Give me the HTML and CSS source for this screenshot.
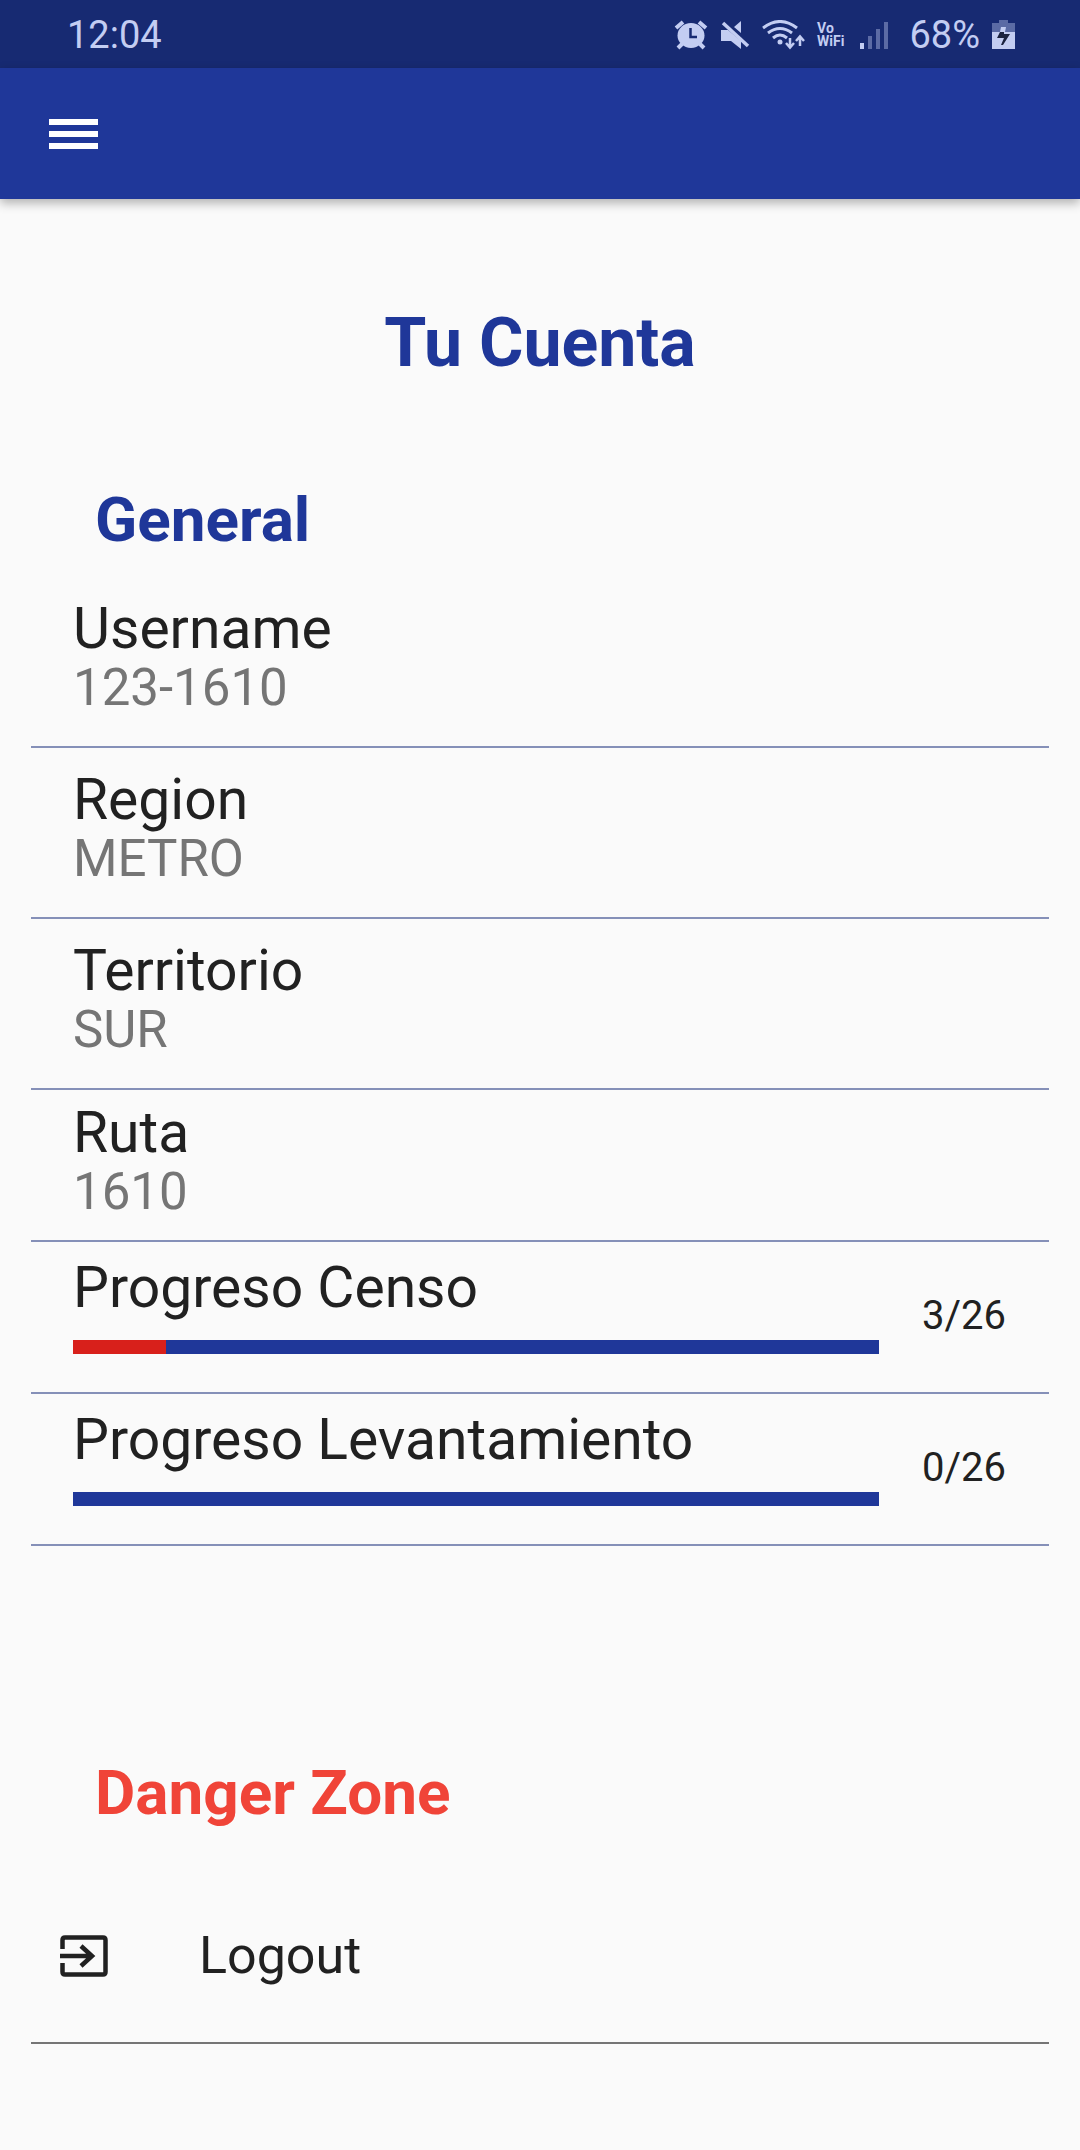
FILE: index.html
```html
<!DOCTYPE html>
<html lang="es">
<head>
    <meta charset="UTF-8">
    <meta name="viewport" content="width=device-width, initial-scale=1.0">
    <title>Tu Cuenta</title>
    <link rel="stylesheet" href="styles.css">
</head>
<body>
    <div class="status-bar">
        <span class="clock">12:04</span>
        <div class="status-icons">
            <!-- alarm -->
            <svg class="icon-alarm" width="34" height="30" viewBox="0 0 34 30">
                <path d="M2 8L9 2M32 8L25 2" stroke="currentColor" stroke-width="4" fill="none"/>
                <path d="M8 24L4 28M26 24L30 28" stroke="currentColor" stroke-width="4" fill="none"/>
                <ellipse cx="17" cy="15.500" rx="13.500" ry="12.500" fill="currentColor"/>
                <path d="M16.500 8V17H23" stroke="#172a72" stroke-width="2.500" fill="none"/>
            </svg>
            <!-- muted speaker -->
            <svg class="icon-mute" width="30" height="30" viewBox="0 0 30 30">
                <path d="M1 10H8L21 21V29L11 21H1ZM21 1V13L14 7Z" fill="currentColor"/>
                <path d="M3 3L28 26" stroke="currentColor" stroke-width="3.500"/>
            </svg>
            <!-- wifi -->
            <svg class="icon-wifi" width="43" height="30" viewBox="0 0 43 30">
                <g stroke="currentColor" stroke-width="3" fill="none">
                    <path d="M1 8Q18 -5 35 8"/>
                    <path d="M6 13Q18 4 30 13"/>
                    <path d="M11 18Q18 12 25 18"/>
                </g>
                <circle cx="18" cy="22" r="2.500" fill="currentColor"/>
                <path d="M28 18V27M24 23L28 27.500L32 23M38 26V17M34 21L38 16.500L42 21" stroke="currentColor" stroke-width="2.500" fill="none"/>
            </svg>
            <div class="vowifi">
                <span>Vo</span>
                <span>WiFi</span>
            </div>
            <!-- signal -->
            <svg class="icon-signal" width="29" height="29" viewBox="0 0 29 29" fill="currentColor">
                <rect x="0" y="22" width="4" height="6"/>
                <g opacity="0.4">
                    <rect x="8" y="15" width="4" height="13"/>
                    <rect x="16" y="8" width="4" height="20"/>
                    <rect x="24" y="1" width="4" height="27"/>
                </g>
            </svg>
            <span class="battery-level">68%</span>
            <!-- battery -->
            <svg class="icon-battery" width="23" height="30" viewBox="0 0 23 30">
                <path d="M7 0H16V3H23V12H0V3H7Z" fill="currentColor" opacity="0.4"/>
                <path d="M0 12H23V29H0Z" fill="currentColor"/>
                <path d="M9 7H14L13 12H8Z" fill="currentColor"/>
                <path d="M8 12H12L12 14H18L11 25H9L12 18H5Z" fill="#1b2340"/>
            </svg>
        </div>
    </div>

    <header class="app-bar">
        <button class="menu-button" aria-label="Menu">
            <span></span>
            <span></span>
            <span></span>
        </button>
    </header>

    <main class="account">
        <h1>Tu Cuenta</h1>

        <h2>General</h2>
        <div class="row">
            <div class="name">Username</div>
            <div class="value">123-1610</div>
        </div>
        <div class="row">
            <div class="name">Region</div>
            <div class="value">METRO</div>
        </div>
        <div class="row">
            <div class="name">Territorio</div>
            <div class="value">SUR</div>
        </div>
        <div class="row dense">
            <div class="name">Ruta</div>
            <div class="value">1610</div>
        </div>
        <div class="row progress-row">
            <div class="progress-box">
                <label class="name" for="censo">Progreso Censo</label>
                <progress id="censo" value="3" max="26"></progress>
            </div>
            <span class="count">3/26</span>
        </div>
        <div class="row progress-row">
            <div class="progress-box">
                <label class="name" for="levantamiento">Progreso Levantamiento</label>
                <progress id="levantamiento" value="0" max="26"></progress>
            </div>
            <span class="count">0/26</span>
        </div>

        <h2 class="danger">Danger Zone</h2>
        <button class="logout">
            <svg width="48" height="42" viewBox="0 0 48 42" fill="none" stroke="#212121">
                <path d="M2.500 14V5Q2.500 2.500 5 2.500H43Q45.500 2.500 45.500 5V37Q45.500 39.500 43 39.500H5Q2.500 39.500 2.500 37V28" stroke-width="4.500"/>
                <path d="M0 21H32M21 11L32 21L21 31" stroke-width="4.500"/>
            </svg>
            <span>Logout</span>
        </button>
    </main>
</body>
</html>
```

FILE: styles.css
```css
* {
    box-sizing: border-box;
}

body {
    margin: 0;
    font-family: Roboto, sans-serif;
    background: #fafafa;
    color: #212121;
}

button {
    font-family: inherit;
    color: inherit;
    background: none;
    border: none;
    cursor: pointer;
}

.status-bar {
    display: flex;
    justify-content: space-between;
    align-items: center;
    height: 68px;
    padding: 2px 65px 0 67px;
    background: #172a72;
    color: #c3cdf2;
}

.clock,
.battery-level {
    font-size: 38px;
    line-height: 44px;
}

.status-icons {
    display: flex;
    align-items: center;
    gap: 12px;
}

.vowifi {
    display: flex;
    flex-direction: column;
    font-size: 14px;
    font-weight: bold;
    line-height: 13px;
}

.icon-signal {
    margin: 0 8px 0 4px;
}

.app-bar {
    display: flex;
    align-items: center;
    height: 131px;
    padding: 0 49px;
    background: #1f3799;
    box-shadow: 0 4px 10px rgba(0, 0, 0, 0.3);
}

.menu-button {
    display: flex;
    flex-direction: column;
    gap: 6px;
    width: 49px;
    padding: 0;
}

.menu-button span {
    height: 6px;
    background: #fff;
}

.account {
    padding: 104px 31px 0;
}

h1 {
    margin: 0;
    font-size: 68px;
    line-height: 80px;
    text-align: center;
    color: #1f3799;
}

h2 {
    margin: 100px 64px 20px;
    font-size: 62px;
    line-height: 74px;
    color: #1f3799;
}

.row {
    padding: 22px 42px 30px;
    border-bottom: 2px solid #8590b8;
}

.row.dense {
    padding: 13px 42px 20px;
}

.name {
    display: block;
    font-size: 57px;
    line-height: 60px;
}

.value {
    font-size: 51px;
    line-height: 57px;
    color: #757575;
}

.progress-row {
    display: flex;
    align-items: center;
    gap: 43px;
    padding: 16px 42px 38px;
}

.progress-box {
    flex: 1;
}

progress {
    display: block;
    width: 100%;
    height: 14px;
    margin-top: 22px;
    border: none;
    appearance: none;
    background: #1f3799;
}

progress::-webkit-progress-bar {
    background: #1f3799;
}

progress::-webkit-progress-value {
    background: #d8201b;
}

.count {
    min-width: 85px;
    padding-top: 20px;
    font-size: 40px;
    line-height: 44px;
}

h2.danger {
    margin: 210px 64px 40px;
    color: #f04438;
}

.logout {
    display: flex;
    align-items: center;
    gap: 91px;
    width: 100%;
    padding: 56px 29px;
    border-bottom: 2px solid #757575;
    font-size: 52px;
    line-height: 60px;
}
```
